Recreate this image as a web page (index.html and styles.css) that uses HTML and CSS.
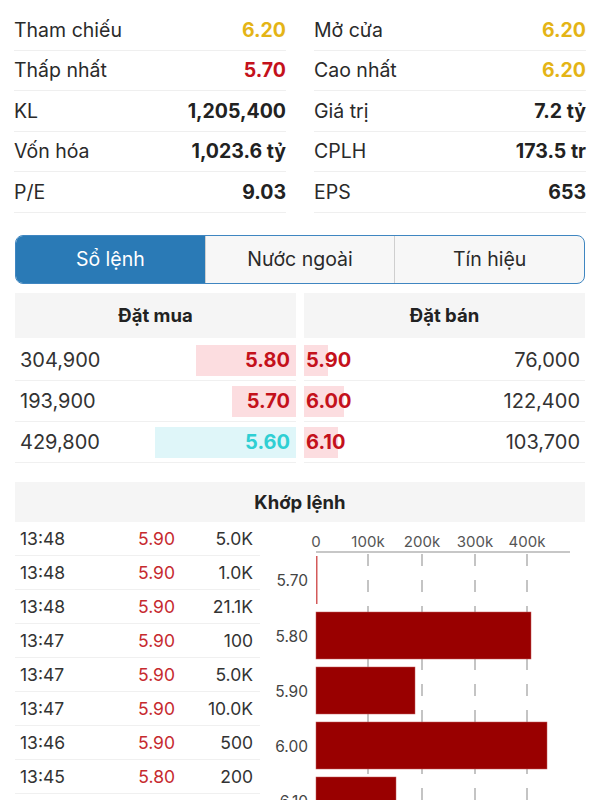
FILE: index.html
```html
<!DOCTYPE html>
<html>
<head>
  <meta charset="utf-8">
  <title>Chi tiết mã</title>
  <link rel="stylesheet" href="styles.css">
</head>
<body>
  <div class="stats">
    <div class="stat-col">
      <div class="stat-row"><span>Tham chiếu</span><b class="ref">6.20</b></div>
      <div class="stat-row"><span>Thấp nhất</span><b class="down">5.70</b></div>
      <div class="stat-row"><span>KL</span><b>1,205,400</b></div>
      <div class="stat-row"><span>Vốn hóa</span><b>1,023.6 tỷ</b></div>
      <div class="stat-row"><span>P/E</span><b>9.03</b></div>
    </div>
    <div class="stat-col">
      <div class="stat-row"><span>Mở cửa</span><b class="ref">6.20</b></div>
      <div class="stat-row"><span>Cao nhất</span><b class="ref">6.20</b></div>
      <div class="stat-row"><span>Giá trị</span><b>7.2 tỷ</b></div>
      <div class="stat-row"><span>CPLH</span><b>173.5 tr</b></div>
      <div class="stat-row"><span>EPS</span><b>653</b></div>
    </div>
  </div>

  <div class="tabs">
    <div class="tab active">Sổ lệnh</div>
    <div class="tab">Nước ngoài</div>
    <div class="tab">Tín hiệu</div>
  </div>

  <div class="book">
    <div class="book-col buy">
      <div class="book-head">Đặt mua</div>
      <div class="book-row"><span>304,900</span><b class="bar down" style="--w:100px">5.80</b></div>
      <div class="book-row"><span>193,900</span><b class="bar down" style="--w:64px">5.70</b></div>
      <div class="book-row"><span>429,800</span><b class="bar floor" style="--w:141px">5.60</b></div>
    </div>
    <div class="book-col sell">
      <div class="book-head">Đặt bán</div>
      <div class="book-row"><b class="bar down" style="--w:24px">5.90</b><span>76,000</span></div>
      <div class="book-row"><b class="bar down" style="--w:40px">6.00</b><span>122,400</span></div>
      <div class="book-row"><b class="bar down" style="--w:34px">6.10</b><span>103,700</span></div>
    </div>
  </div>

  <div class="match">
    <div class="match-head">Khớp lệnh</div>
    <div class="match-body">
      <div class="ticks">
        <div class="tick"><span>13:48</span><span class="tp">5.90</span><span class="tv">5.0K</span></div>
        <div class="tick"><span>13:48</span><span class="tp">5.90</span><span class="tv">1.0K</span></div>
        <div class="tick"><span>13:48</span><span class="tp">5.90</span><span class="tv">21.1K</span></div>
        <div class="tick"><span>13:47</span><span class="tp">5.90</span><span class="tv">100</span></div>
        <div class="tick"><span>13:47</span><span class="tp">5.90</span><span class="tv">5.0K</span></div>
        <div class="tick"><span>13:47</span><span class="tp">5.90</span><span class="tv">10.0K</span></div>
        <div class="tick"><span>13:46</span><span class="tp">5.90</span><span class="tv">500</span></div>
        <div class="tick"><span>13:45</span><span class="tp">5.80</span><span class="tv">200</span></div>
      </div>
      <svg class="chart" width="340" height="290" viewBox="0 0 340 290">
        <g class="axis-text">
          <text x="56" y="25">0</text>
          <text x="108" y="25">100k</text>
          <text x="162" y="25">200k</text>
          <text x="215" y="25">300k</text>
          <text x="267" y="25">400k</text>
        </g>
        <line x1="56" y1="30" x2="310" y2="30" class="axis"/>
        <g class="grid">
          <line x1="108" y1="32" x2="108" y2="290"/>
          <line x1="162" y1="32" x2="162" y2="290"/>
          <line x1="215" y1="32" x2="215" y2="290"/>
          <line x1="267" y1="32" x2="267" y2="290"/>
        </g>
        <g class="bars">
          <rect x="56" y="34" width="1.5" height="48" class="thin"/>
          <rect x="56" y="90" width="215" height="47"/>
          <rect x="56" y="145" width="99" height="47"/>
          <rect x="56" y="200" width="231" height="47"/>
          <rect x="56" y="255" width="80" height="47"/>
        </g>
        <g class="price-text">
          <text x="48" y="64">5.70</text>
          <text x="48" y="120">5.80</text>
          <text x="48" y="175">5.90</text>
          <text x="48" y="230">6.00</text>
          <text x="48" y="285">6.10</text>
        </g>
      </svg>
    </div>
  </div>
</body>
</html>
```

FILE: styles.css
```css
body { margin: 0; background: #fff; color: #222; font-family: Inter, "Noto Sans", sans-serif; overflow: hidden; }
b { font-weight: 700; }

.stats { display: flex; gap: 28px; padding: 10px 14px 0; }
.stat-col { flex: 1; }
.stat-row {
  display: flex; justify-content: space-between; align-items: center;
  height: 39.5px; border-bottom: 1px solid #efefef; font-size: 19.5px;
}
.stat-row span { color: #2a2a2a; }
.ref { color: #e4b416; }
.down { color: #c4111b; }

.tabs {
  display: flex; margin: 22px 15px 0; height: 47px;
  border: 1px solid #3f86c1; border-radius: 8px; overflow: hidden;
  background: #f7f7f7;
}
.tab {
  flex: 1; display: flex; align-items: center; justify-content: center;
  font-size: 19.5px; color: #2a2a2a; border-left: 1px solid #cfcfcf;
}
.tab:first-child { border-left: none; }
.tab.active { background: #2a7ab6; color: #fff; }

.book { display: flex; gap: 8px; margin: 9px 15px 0; }
.book-col { flex: 1; }
.book-head {
  height: 45px; display: flex; align-items: center; justify-content: center;
  background: #f5f5f5; font-size: 18.5px; font-weight: 700;
}
.book-row {
  display: flex; align-items: center; box-sizing: border-box;
  height: 41px; padding-top: 1px; border-bottom: 1px solid #f0f0f0; font-size: 20px;
}
.book-row:nth-child(2) { margin-top: 2px; }
.book-row span { color: #333; }
.buy .book-row span { padding-left: 5px; }
.sell .book-row span { padding-right: 5px; }
.bar {
  flex: 1; height: 31px; line-height: 31px; background-repeat: no-repeat;
  background-size: var(--w) 100%;
  background-image: linear-gradient(#fcdde0, #fcdde0);
}
.buy .bar { padding-right: 6px; text-align: right; background-position: right top; }
.sell .bar { padding-left: 2px; background-position: left top; }
.bar.floor { color: #2fcfd3; background-image: linear-gradient(#dff6f9, #dff6f9); }

.match { margin: 19px 15px 0; }
.match-head {
  height: 40px; display: flex; align-items: center; justify-content: center;
  background: #f5f5f5; font-size: 18.5px; font-weight: 700;
}
.match-body { display: flex; }
.ticks { width: 245px; flex: none; }
.tick {
  display: grid; grid-template-columns: 100px 55px 78px;
  height: 33px; align-items: center; padding-left: 5px;
  border-bottom: 1px solid #f0f0f0; font-size: 17.5px; color: #333;
}
.tp { text-align: right; color: #c62a2f; }
.tv { text-align: right; }
.chart { flex: none; display: block; font-family: Inter, sans-serif; }
.axis-text text { font-size: 15px; fill: #555; text-anchor: middle; }
.price-text text { font-size: 15.5px; fill: #444; text-anchor: end; }
.axis { stroke: #b5b5b5; stroke-width: 1.5; }
.grid line { stroke: #c4c4c4; stroke-width: 2; stroke-dasharray: 12 14; }
.bars rect { fill: #990000; stroke: #c25a5a; stroke-width: 0.5; }
.bars .thin { fill: #d35a5a; stroke: none; }
```
